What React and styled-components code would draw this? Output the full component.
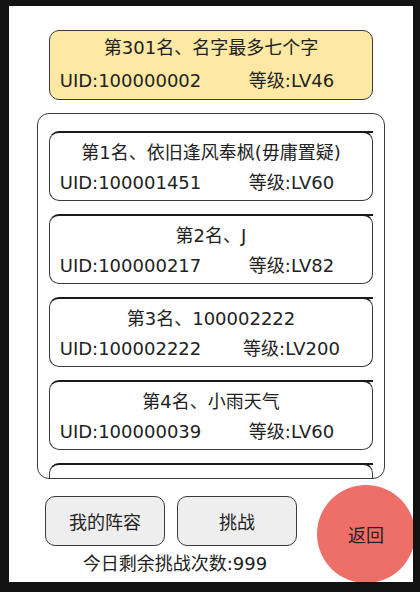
import React from "react";
import styled, { createGlobalStyle } from "styled-components";

const GlobalStyle = createGlobalStyle`
  html, body {
    margin: 0;
    padding: 0;
    background: #121212;
  }
  body {
    font-family: "DejaVu Sans", "Noto Sans CJK SC", sans-serif;
    color: #222;
  }
`;

const Screen = styled.div`
  position: relative;
  margin: 6px 0 0 9px;
  width: 404px;
  height: 576px;
  background: #fff;
  overflow: hidden;
  padding-top: 24px;
  box-sizing: border-box;
`;

const RankCard = styled.div`
  position: relative;
  box-sizing: border-box;
  width: 324px;
  height: 70px;
  flex-shrink: 0;
  border: 1px solid #3a3a3a;
  border-top: 2px solid #1a1a1a;
  border-radius: 10px;
  background: #fff;
  display: flex;
  flex-direction: column;
  padding-top: 8px;
  gap: 6px;

  &::after {
    content: "";
    position: absolute;
    top: -2px;
    right: -1px;
    width: 10px;
    height: 2px;
    background: #1a1a1a;
  }
`;

const MyCard = styled.div`
  box-sizing: border-box;
  margin-left: 40px;
  width: 324px;
  height: 70px;
  border: 1px solid #3a3a3a;
  border-radius: 10px;
  background: #fde9a3;
  display: flex;
  flex-direction: column;
  padding-top: 5px;
  gap: 9px;
`;

const Title = styled.div`
  text-align: center;
  font-size: 18px;
  line-height: 24px;
  white-space: nowrap;
`;

const InfoRow = styled.div`
  display: flex;
  font-size: 18px;
  line-height: 24px;
  white-space: nowrap;
`;

const InfoCell = styled.span`
  flex: 1;
  text-align: center;
`;

const ListBox = styled.div`
  box-sizing: border-box;
  margin: 13px 0 0 28px;
  width: 348px;
  height: 366px;
  border: 1px solid #3a3a3a;
  border-radius: 12px;
  padding: 17px 0 0 11px;
  overflow: hidden;
  display: flex;
  flex-direction: column;
  gap: 13px;
`;

const Bottom = styled.div`
  display: flex;
  align-items: flex-start;
  margin-top: 6px;
  padding-left: 36px;
`;

const LeftCol = styled.div`
  display: flex;
  flex-direction: column;
  align-items: center;
  padding-top: 11px;
`;

const ButtonRow = styled.div`
  display: flex;
  gap: 12px;
`;

const ActionButton = styled.button`
  box-sizing: border-box;
  width: 120px;
  height: 50px;
  padding: 0;
  background: #eeeeee;
  border: 1px solid #3a3a3a;
  border-radius: 10px;
  font-family: inherit;
  font-size: 18px;
  color: #222;
  cursor: pointer;
`;

const Remaining = styled.div`
  margin-top: 6px;
  margin-left: 8px;
  font-size: 18px;
  line-height: 24px;
  white-space: nowrap;
`;

const BackButton = styled.button`
  flex-shrink: 0;
  margin-left: 20px;
  width: 98px;
  height: 98px;
  padding: 0;
  border-radius: 50%;
  border: none;
  background: #ee6f68;
  font-family: inherit;
  font-size: 18px;
  color: #222;
  cursor: pointer;
`;

const mine = { rank: 301, name: "名字最多七个字", uid: "100000002", lv: 46 };

const ranks = [
  { rank: 1, name: "依旧逢风奉枫(毋庸置疑)", uid: "100001451", lv: 60 },
  { rank: 2, name: "J", uid: "100000217", lv: 82 },
  { rank: 3, name: "100002222", uid: "100002222", lv: 200 },
  { rank: 4, name: "小雨天气", uid: "100000039", lv: 60 },
];

function EntryText({ item }) {
  return (
    <>
      <Title>
        第{item.rank}名、{item.name}
      </Title>
      <InfoRow>
        <InfoCell>UID:{item.uid}</InfoCell>
        <InfoCell>等级:LV{item.lv}</InfoCell>
      </InfoRow>
    </>
  );
}

export default function App() {
  return (
    <>
      <GlobalStyle />
      <Screen>
        <MyCard>
          <EntryText item={mine} />
        </MyCard>
        <ListBox>
          {ranks.map((r) => (
            <RankCard key={r.rank}>
              <EntryText item={r} />
            </RankCard>
          ))}
          {/* next entry, scrolled out of view */}
          <RankCard />
        </ListBox>
        <Bottom>
          <LeftCol>
            <ButtonRow>
              <ActionButton>我的阵容</ActionButton>
              <ActionButton>挑战</ActionButton>
            </ButtonRow>
            <Remaining>今日剩余挑战次数:999</Remaining>
          </LeftCol>
          <BackButton>返回</BackButton>
        </Bottom>
      </Screen>
    </>
  );
}
